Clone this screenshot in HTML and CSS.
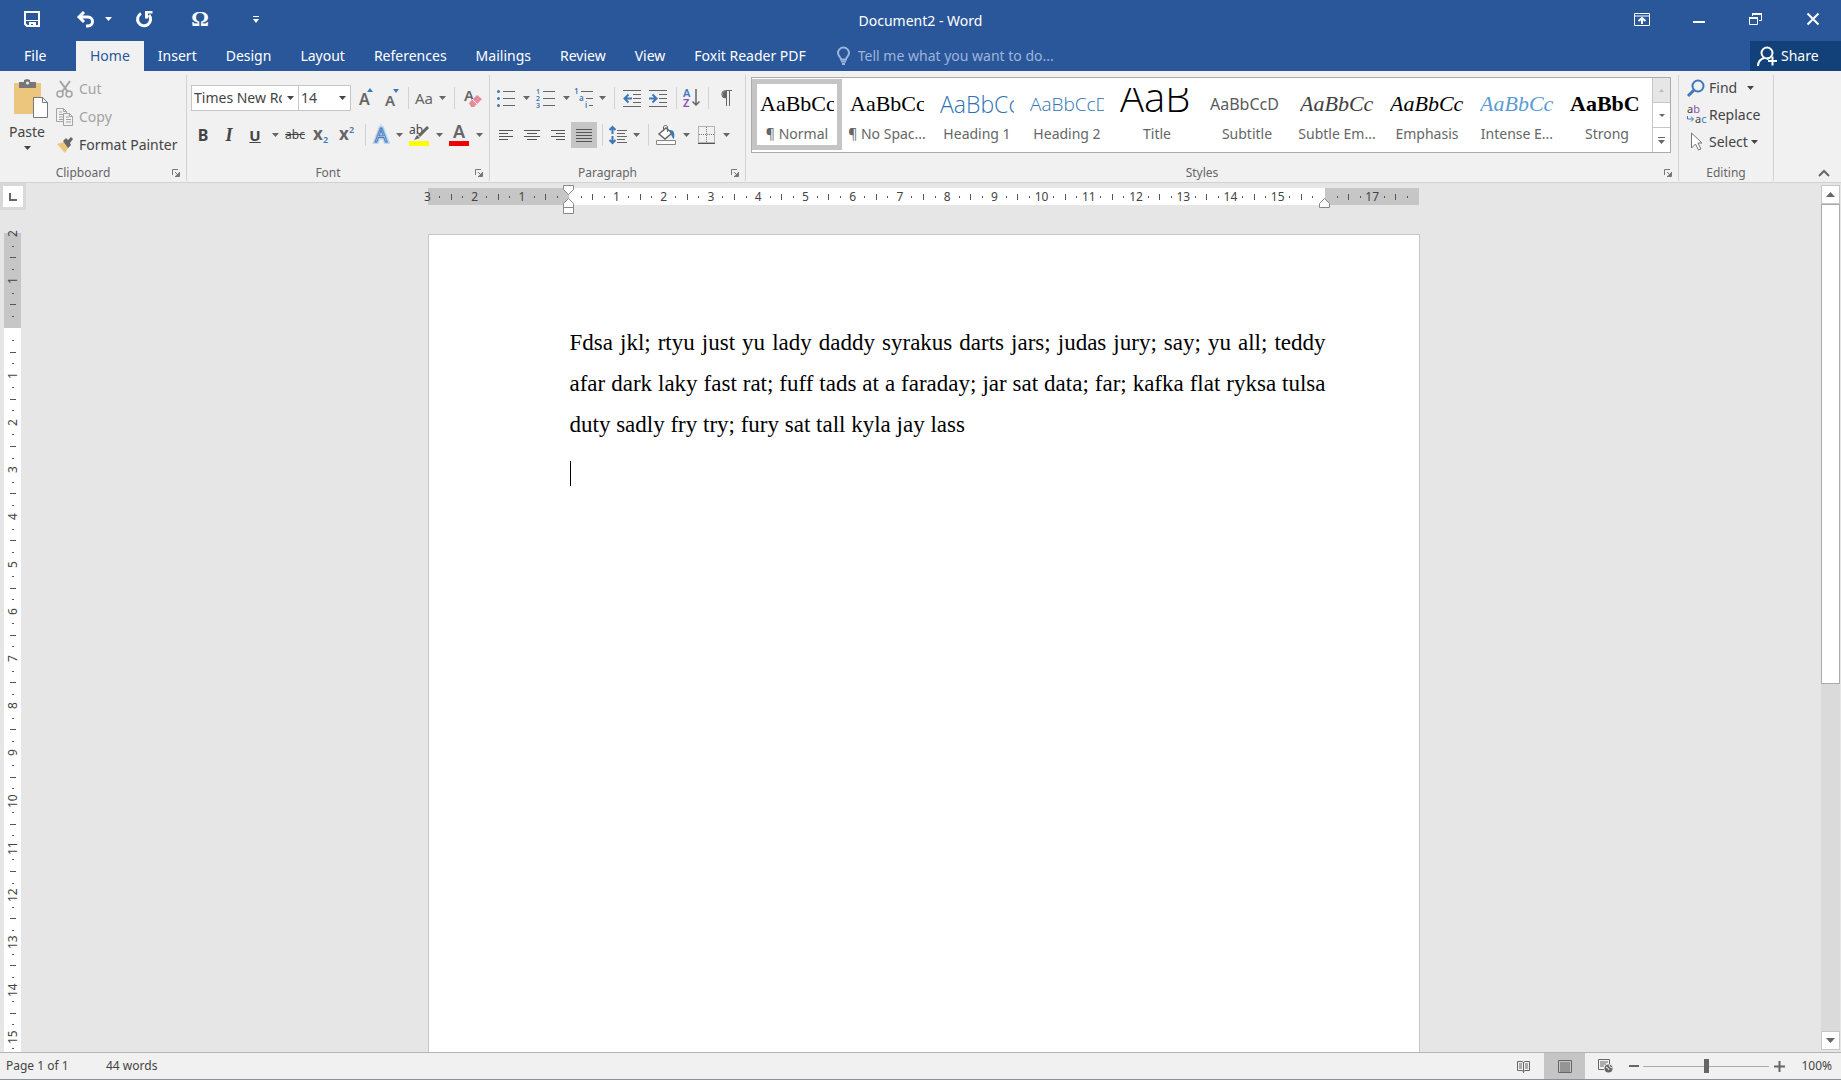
FILE: index.html
```html
<!DOCTYPE html>
<html lang="en">
<head>
<meta charset="utf-8">
<title>Document2 - Word</title>
<link rel="stylesheet" href="styles.css">
</head>
<body>
<svg class="defs" aria-hidden="true">
  <symbol id="caret" viewBox="0 0 7 4"><path d="M0 0h7L3.500 4z" fill="currentColor"/></symbol>
  <symbol id="launch" viewBox="0 0 8 8"><path d="M.5 6V.5H6M3 3l3 3M7.500 3v4.500H3" fill="none" stroke="#777"/><path d="M7 3.500V7H3.500z" fill="#777"/></symbol>
</svg>
<div class="app">
  <header class="titlebar">
    <div class="quick">
      <button class="q-save" aria-label="Save"><svg width="16" height="16"><path d="M1 1h14v14H3l-2-2z" fill="none" stroke="#fff" stroke-width="2"/><path d="M2 9h12v1H2zM5 11h7v5H9v-3H7v3H5z" fill="#fff"/></svg></button>
      <button class="q-undo" aria-label="Undo"><svg width="18" height="17"><path d="M7 1L2 6l5 5M2.500 6H11a4.500 4.500 0 0 1 0 9H9" fill="none" stroke="#fff" stroke-width="3"/></svg></button>
      <button class="q-caret" aria-label="Undo list"><svg width="7" height="4"><use href="#caret"/></svg></button>
      <button class="q-redo" aria-label="Repeat"><svg width="17" height="17"><path d="M5 2.500A6.500 6.500 0 1 0 13 4" fill="none" stroke="#fff" stroke-width="3"/><path d="M9 0h7.500v2.500H12v5H9z" fill="#fff"/></svg></button>
      <button class="q-omega" aria-label="Symbol">Ω</button>
      <button class="q-more" aria-label="Customize toolbar"><svg width="6" height="7"><path d="M0 .5h6" stroke="#fff"/><path d="M0 3h6L3 7z" fill="#fff"/></svg></button>
    </div>
    <h1 class="doc-title">Document2 - Word</h1>
    <div class="window-buttons">
      <button aria-label="Ribbon display options"><svg width="16" height="13"><path d="M.5.5h15v12H.5zM0 3h16" fill="none" stroke="#fff"/><path d="M8 11V5M4.500 8L8 5l3.500 3" fill="none" stroke="#fff" stroke-width="2"/></svg></button>
      <button class="low" aria-label="Minimize"><svg width="12" height="2"><path d="M0 0h12v2H0z" fill="#fff"/></svg></button>
      <button aria-label="Restore"><svg width="13" height="12"><path d="M3.500 3V.5h9v7H10M.5 4.500h8v7h-8z" fill="none" stroke="#fff"/><path d="M3 1h10M0 5h9" stroke="#fff" stroke-width="2"/></svg></button>
      <button aria-label="Close"><svg width="12" height="12"><path d="M.5.5l11 11M11.500.5l-11 11" stroke="#fff" stroke-width="2"/></svg></button>
    </div>
  </header>
  <nav class="tabs">
    <a class="file" href="#file">File</a>
    <a class="active" href="#home" aria-current="page">Home</a>
    <a href="#insert">Insert</a>
    <a href="#design">Design</a>
    <a href="#layout">Layout</a>
    <a href="#references">References</a>
    <a href="#mailings">Mailings</a>
    <a href="#review">Review</a>
    <a href="#view">View</a>
    <a href="#foxit">Foxit Reader PDF</a>
    <label class="tell">
      <svg width="13" height="18"><path d="M4 12.500C4 10 1 9.500 1 6a5.500 5.500 0 0 1 11 0c0 3.500-3 4-3 6.500z" fill="none" stroke="#9db4dc" stroke-width="2"/><path d="M4 14.500h5M5 17h3" stroke="#9db4dc" stroke-width="2"/></svg>
      <input type="text" placeholder="Tell me what you want to do..." aria-label="Tell me what you want to do">
    </label>
    <button class="share"><svg width="20" height="21"><circle cx="10" cy="7" r="5.500" fill="none" stroke="#fff" stroke-width="2"/><path d="M1 20c0-4.500 3-7 6-8M15.500 10.500v9M11 15h9M12 12l-2 1" fill="none" stroke="#fff" stroke-width="2"/></svg>Share</button>
  </nav>

  <section class="ribbon">
    <div class="group clipboard">
      <div class="clip-body">
        <button class="paste">
          <svg width="36" height="39"><path d="M1 4h27v31H1z" fill="#ebc67c"/><path d="M6 3h5V1l3-1 3 1v2h6v6H6z" fill="#777"/><circle cx="14.500" cy="4" r="1.500" fill="#f1f1f1"/><path d="M20.500 18.500h9l5 5v15h-14z" fill="#fff" stroke="#777"/><path d="M29.500 18.500v5h5" fill="none" stroke="#777"/></svg>
          <span>Paste</span>
          <svg width="7" height="4"><use href="#caret"/></svg>
        </button>
        <div class="stack">
          <button class="off"><svg width="18" height="18"><path d="M4 1l8 11M14 1L6 12" stroke="#a3a3a3" stroke-width="2" fill="none"/><circle cx="4" cy="14" r="3" fill="none" stroke="#a3a3a3" stroke-width="1.500"/><circle cx="13" cy="14" r="3" fill="none" stroke="#a3a3a3" stroke-width="1.500"/></svg>Cut</button>
          <button class="off"><svg width="18" height="18"><path d="M7 13.500H.5V.5h7l3 3V5M7.500.5v3h3M3 4h3M3 6.500h4M3 9h4M3 11.500h4" fill="none" stroke="#a3a3a3"/><path d="M7.500 5.500h6l3 3v9h-9zM13.500 5.500v3h3M10 9h3M10 11.500h5M10 14h5" fill="#f1f1f1" stroke="#a3a3a3"/></svg>Copy</button>
          <button><svg width="18" height="16"><path d="M1 7l7-2 5 5-4 6z" fill="#ebc67c"/><path d="M7 4l3-3 2 2 3-3 2 2-3 4 1 2-3 3z" fill="#666"/></svg>Format Painter</button>
        </div>
      </div>
      <footer><span>Clipboard</span><button aria-label="Clipboard settings"><svg width="8" height="8"><use href="#launch"/></svg></button></footer>
    </div>

    <div class="group font">
      <div class="rows">
        <div class="row combos">
          <span class="combo name"><select aria-label="Font"><option>Times New Roman</option></select><svg width="7" height="4"><use href="#caret"/></svg></span>
          <span class="combo size"><select aria-label="Font size"><option>14</option></select><svg width="7" height="4"><use href="#caret"/></svg></span>
          <button class="m" aria-label="Grow font"><svg width="20" height="20"><text class="ic" x="5" y="17" font-size="16">A</text><path d="M13 4l3-4 3 4z" fill="#3f78b8"/></svg></button>
          <button class="m" aria-label="Shrink font"><svg width="20" height="20"><text class="ic" x="5" y="18" font-size="15">A</text><path d="M13 1l3 4 3-4z" fill="#3f78b8"/></svg></button>
          <i class="sep"></i>
          <button class="s aa" aria-label="Change case">Aa</button><button class="c" aria-label="Case list"><svg width="7" height="4"><use href="#caret"/></svg></button>
          <i class="sep"></i>
          <button class="m" aria-label="Clear formatting"><svg width="18" height="20"><text class="ic" x="1" y="13" font-size="15">A</text><path d="M6 15l8-8 5 4-8 8H8z" fill="#e8899b"/><path d="M9 11l5 5" stroke="#fff"/></svg></button>
        </div>
        <div class="row font2">
          <button class="m bold" aria-label="Bold">B</button>
          <button class="m ital" aria-label="Italic">I</button>
          <button class="m under" aria-label="Underline">U</button><button class="c" aria-label="Underline list"><svg width="7" height="4"><use href="#caret"/></svg></button>
          <button class="m strike" aria-label="Strikethrough">abc</button>
          <button class="m" aria-label="Subscript"><svg width="18" height="20"><text class="ic heavy" x="1" y="15" font-size="17">x</text><text class="ic blue" x="11" y="18" font-size="9">2</text></svg></button>
          <button class="m" aria-label="Superscript"><svg width="18" height="20"><text class="ic heavy" x="1" y="15" font-size="17">x</text><text class="ic blue" x="11" y="8" font-size="9">2</text></svg></button>
          <i class="sep"></i>
          <button class="s" aria-label="Text effects"><svg width="20" height="22"><text x="4" y="18" class="fx-glow">A</text><text x="4" y="18" class="fx">A</text></svg></button><button class="c" aria-label="Effects list"><svg width="7" height="4"><use href="#caret"/></svg></button>
          <button class="m" aria-label="Highlight"><svg width="22" height="22"><path d="M1 17h20v5H1z" fill="#ff0"/><text class="ic thin" x="1" y="10" font-size="12">ab</text><path d="M20 3l-9 9" stroke="#666" stroke-width="3"/><path d="M6 16l3-5 3 3z" fill="#666"/></svg></button><button class="c" aria-label="Highlight list"><svg width="7" height="4"><use href="#caret"/></svg></button>
          <button class="m" aria-label="Font color"><svg width="20" height="22"><path d="M0 17h20v5H0z" fill="#f00000"/><text class="ic" x="4" y="14" font-size="18">A</text></svg></button><button class="c" aria-label="Color list"><svg width="7" height="4"><use href="#caret"/></svg></button>
        </div>
      </div>
      <footer><span>Font</span><button aria-label="Font settings"><svg width="8" height="8"><use href="#launch"/></svg></button></footer>
    </div>

    <div class="group para">
      <div class="rows">
        <div class="row">
          <button class="m" aria-label="Bullets"><svg width="18" height="18"><path d="M6 2.500h12M6 9.500h12M6 16.500h12" stroke="#666"/><circle cx="1.500" cy="2.500" r="1.500" fill="#3f78b8"/><circle cx="1.500" cy="9.500" r="1.500" fill="#3f78b8"/><circle cx="1.500" cy="16.500" r="1.500" fill="#3f78b8"/></svg></button><button class="c" aria-label="Bullet list"><svg width="7" height="4"><use href="#caret"/></svg></button>
          <button class="m" aria-label="Numbering"><svg width="20" height="20"><path d="M7 3.500h12M7 10.500h12M7 17.500h12" stroke="#666"/><g class="ic blue" font-size="7"><text x="0" y="6">1</text><text x="0" y="13">2</text><text x="0" y="20">3</text></g></svg></button><button class="c" aria-label="Number list"><svg width="7" height="4"><use href="#caret"/></svg></button>
          <button class="s" aria-label="Multilevel list"><svg width="20" height="20"><path d="M7 3.500h12M12 10.500h7M15 17.500h4" stroke="#666"/><g class="ic blue" font-size="8"><text x="0" y="6">1</text><text x="5" y="13">a</text><text x="11" y="20">i</text></g></svg></button><button class="c" aria-label="Multilevel choices"><svg width="7" height="4"><use href="#caret"/></svg></button>
          <i class="sep"></i>
          <button class="m" aria-label="Decrease indent"><svg width="18" height="18"><path d="M0 1.500h18M10 5.500h8M10 9.500h8M10 13.500h8M0 17.500h18" stroke="#666"/><path d="M9 9.500H2M5.500 5.500l-4 4 4 4" fill="none" stroke="#3f78b8" stroke-width="2"/></svg></button>
          <button class="m" aria-label="Increase indent"><svg width="18" height="18"><path d="M0 1.500h18M10 5.500h8M10 9.500h8M10 13.500h8M0 17.500h18" stroke="#666"/><path d="M0 9.500h7M3.500 5.500l4 4-4 4" fill="none" stroke="#3f78b8" stroke-width="2"/></svg></button>
          <i class="sep"></i>
          <button class="s" aria-label="Sort"><svg width="18" height="20"><text class="ic blue" x="0" y="9" font-size="11">A</text><text class="ic purple" x="0" y="19" font-size="11">Z</text><path d="M13 1v16M9.500 13.500L13 17l3.500-3.500" fill="none" stroke="#666" stroke-width="1.500"/></svg></button>
          <i class="sep"></i>
          <button class="m" aria-label="Show paragraph marks"><svg width="12" height="16"><path d="M5.500 8A3.500 3.500 0 0 1 5.500.5H12M6.500 1v15M9.500 1v15" fill="none" stroke="#666"/><path d="M6 1v7a3.500 3.500 0 0 1 0-7z" fill="#666"/></svg></button>
        </div>
        <div class="row">
          <button class="m" aria-label="Align left"><svg width="14" height="12"><path d="M0 1.500h14M0 4.500h9M0 7.500h14M0 10.500h9" stroke="#555"/></svg></button>
          <button class="m" aria-label="Center"><svg width="16" height="12"><path d="M0 1.500h16M3 4.500h10M0 7.500h16M3 10.500h10" stroke="#555"/></svg></button>
          <button class="m" aria-label="Align right"><svg width="14" height="12"><path d="M0 1.500h14M5 4.500h9M0 7.500h14M5 10.500h9" stroke="#555"/></svg></button>
          <button class="m on" aria-label="Justify" aria-pressed="true"><svg width="16" height="14"><path d="M0 1.500h16M0 4.500h16M0 7.500h16M0 10.500h16M0 13.500h16" stroke="#555"/></svg></button>
          <i class="sep"></i>
          <button class="s" aria-label="Line spacing"><svg width="18" height="18"><path d="M8 4.500h10M8 7.500h8M8 10.500h10M8 13.500h8M8 16.500h10" stroke="#666"/><path d="M3.500 1v7M.5 4l3-3 3 3M3.500 10v7M.5 14l3 3 3-3" fill="none" stroke="#3f78b8" stroke-width="2"/></svg></button><button class="c" aria-label="Spacing list"><svg width="7" height="4"><use href="#caret"/></svg></button>
          <i class="sep"></i>
          <button class="m" aria-label="Shading"><svg width="20" height="20"><path d="M.5 15.500h19v4H.5z" fill="#fff" stroke="#888"/><path d="M3 9l7-6 6 5-7 6z" fill="#fff" stroke="#666" stroke-width="1.500"/><path d="M7.500 5V2c0-2 4-2 4 0v5" fill="none" stroke="#666"/><path d="M14 5c4 0 5 3 4 9-2-1-2-4-4-6z" fill="#3f78b8"/></svg></button><button class="c" aria-label="Shading list"><svg width="7" height="4"><use href="#caret"/></svg></button>
          <button class="m" aria-label="Borders"><svg width="17" height="18"><path d="M.5.5h16v16H.5zM8.500 1v16M1 8.500h16" fill="none" stroke="#777" stroke-dasharray="1 1"/><path d="M0 17.500h17" stroke="#555"/></svg></button><button class="c" aria-label="Border list"><svg width="7" height="4"><use href="#caret"/></svg></button>
        </div>
      </div>
      <footer><span>Paragraph</span><button aria-label="Paragraph settings"><svg width="8" height="8"><use href="#launch"/></svg></button></footer>
    </div>

    <div class="group styles">
      <div class="gallery">
        <button class="style chosen"><b class="serif">AaBbCc</b><span>¶ Normal</span></button>
        <button class="style"><b class="serif">AaBbCc</b><span>¶ No Spac...</span></button>
        <button class="style"><b class="h1">AaBbCc</b><span>Heading 1</span></button>
        <button class="style"><b class="h2">AaBbCcD</b><span>Heading 2</span></button>
        <button class="style"><b class="big">AaB</b><span>Title</span></button>
        <button class="style"><b class="sub">AaBbCcD</b><span>Subtitle</span></button>
        <button class="style"><b class="serif em soft">AaBbCc</b><span>Subtle Em...</span></button>
        <button class="style"><b class="serif em">AaBbCc</b><span>Emphasis</span></button>
        <button class="style"><b class="serif em intense">AaBbCc</b><span>Intense E...</span></button>
        <button class="style"><b class="serif strong">AaBbC</b><span>Strong</span></button>
        <div class="gallery-nav">
          <button class="dim" aria-label="Previous styles"><svg width="5" height="3"><path d="M0 3h5L2.500 0z" fill="#bbb"/></svg></button>
          <button aria-label="Next styles"><svg width="6" height="3"><path d="M0 0h6L3 3z" fill="#666"/></svg></button>
          <button aria-label="More styles"><svg width="7" height="7"><path d="M0 .5h7" stroke="#666"/><path d="M0 3h7L3.500 7z" fill="#666"/></svg></button>
        </div>
      </div>
      <footer><span>Styles</span><button aria-label="Styles settings"><svg width="8" height="8"><use href="#launch"/></svg></button></footer>
    </div>

    <div class="group editing">
      <div class="stack">
        <button><svg width="20" height="18"><circle cx="12" cy="7" r="5.500" fill="none" stroke="#3f78b8" stroke-width="2"/><path d="M8 11l-6 6" stroke="#3f78b8" stroke-width="3"/></svg>Find<svg class="find-caret" width="7" height="4"><use href="#caret"/></svg></button>
        <button><svg width="20" height="20"><text class="ic thin" x="1" y="8" font-size="11">a<tspan class="purple">b</tspan></text><text class="ic thin" x="9" y="18" font-size="11">a<tspan class="blue">c</tspan></text><path d="M1.500 11v3H7M5 11.500L7.500 14 5 16.500" fill="none" stroke="#3f78b8"/></svg>Replace</button>
        <button><svg width="20" height="19"><path d="M5.500 1v15l4-4 3 6 2.500-1-3-6h4z" fill="#fff" stroke="#777"/></svg>Select<svg width="7" height="4"><use href="#caret"/></svg></button>
      </div>
      <footer><span>Editing</span></footer>
    </div>
    <button class="collapse" aria-label="Collapse ribbon"><svg width="12" height="7"><path d="M1 6l5-5 5 5" fill="none" stroke="#666" stroke-width="2"/></svg></button>
  </section>

  <main class="work">
    <aside class="left">
      <button class="tabstop" aria-label="Tab stop"><svg width="8" height="8"><path d="M1 0v7h7" fill="none" stroke="#666" stroke-width="2"/></svg></button>
      <div class="vruler" aria-hidden="true">
        <i class="shade"><b>2</b></i><i class="shade"><b>1</b></i><i></i><i><b>1</b></i><i><b>2</b></i><i><b>3</b></i><i><b>4</b></i><i><b>5</b></i><i><b>6</b></i><i><b>7</b></i><i><b>8</b></i><i><b>9</b></i><i><b>10</b></i><i><b>11</b></i><i><b>12</b></i><i><b>13</b></i><i><b>14</b></i><i><b>15</b></i>
      </div>
    </aside>
    <div class="canvas">
      <div class="hruler" aria-hidden="true">
        <i class="shade"><b>3</b></i><i class="shade"><b>2</b></i><i class="shade"><b>1</b></i><i></i><i><b>1</b></i><i><b>2</b></i><i><b>3</b></i><i><b>4</b></i><i><b>5</b></i><i><b>6</b></i><i><b>7</b></i><i><b>8</b></i><i><b>9</b></i><i><b>10</b></i><i><b>11</b></i><i><b>12</b></i><i><b>13</b></i><i><b>14</b></i><i><b>15</b></i><i class="shade"></i><i class="shade"><b>17</b></i>
        <svg class="indent" width="11" height="29"><path d="M.5.5h10v4l-5 5-5-5zM.5 22.500v-4l5-5 5 5v4zM.5 22.500h10v6H.5z" fill="#fff" stroke="#888"/></svg>
        <svg class="indent-right" width="11" height="10"><path d="M.5 9.500v-4l5-5 5 5v4z" fill="#fff" stroke="#888"/></svg>
      </div>
      <article class="page" contenteditable="true" spellcheck="false">
        <p>Fdsa jkl; rtyu just yu lady daddy syrakus darts jars; judas jury; say; yu all; teddy afar dark laky fast rat; fuff tads at a faraday; jar sat data; far; kafka flat ryksa tulsa duty sadly fry try; fury sat tall kyla jay lass</p>
        <div class="cursor"></div>
      </article>
    </div>
    <div class="scroll">
      <button aria-label="Scroll up"><svg width="9" height="5"><path d="M0 5h9L4.500 0z" fill="#666"/></svg></button>
      <div class="track"><div class="thumb"></div></div>
      <button aria-label="Scroll down"><svg width="9" height="5"><path d="M0 0h9L4.500 5z" fill="#666"/></svg></button>
    </div>
  </main>

  <footer class="status">
    <span class="pages">Page 1 of 1</span><span>44 words</span>
    <div class="views">
      <button aria-label="Read mode"><svg width="13" height="13"><path d="M6.500 2v11M.5 1.500H5l1.500 1L8 1.500h4.500v9H8l-1.500 1-1.500-1H.5zM2 4h3M2 6h3M2 8h3M8 4h3M8 6h3M8 8h3" fill="none" stroke="#666"/></svg></button>
      <button class="on" aria-label="Print layout"><svg width="14" height="13"><path d="M.5.5h13v12H.5zM2 3h10M2 5h10M2 7h10M2 9h10M2 11h10" fill="none" stroke="#666"/></svg></button>
      <button aria-label="Web layout"><svg width="15" height="14"><path d="M6 10.500H.5V.5h11V5M2 3h8M2 5h6M2 7h4" fill="none" stroke="#666"/><circle cx="10.500" cy="9.500" r="4" fill="#666"/><path d="M8 8l2 1 1 2M11 6l1 2 2 1" stroke="#f1f1f1" fill="none"/></svg></button>
    </div>
    <div class="zoom">
      <button aria-label="Zoom out"><svg width="10" height="2"><path d="M0 0h10v2H0z" fill="#666"/></svg></button>
      <input type="range" min="0" max="200" value="100" aria-label="Zoom">
      <button aria-label="Zoom in"><svg width="11" height="11"><path d="M0 5.500h11M5.500 0v11" stroke="#666" stroke-width="2"/></svg></button>
      <span>100%</span>
    </div>
  </footer>
</div>
</body>
</html>
```
FILE: styles.css
```css
* { box-sizing: border-box; }
body { margin: 0; font: 14px/20px "Noto Sans", "Open Sans", sans-serif; color: #444; }
button { border: 0; padding: 0; margin: 0; background: none; font: inherit; color: inherit; display: flex; align-items: center; justify-content: center; }
a { text-decoration: none; color: inherit; }
svg { flex: none; display: block; overflow: visible; }
.defs { position: absolute; width: 0; height: 0; }
.app { display: flex; flex-direction: column; height: 100vh; background: #e6e6e6; overflow: hidden; }

/* title bar */
.titlebar { display: grid; grid-template-columns: 1fr auto 1fr; background: #2a579a; color: #fff; height: 41px; align-items: start; flex: none; }
.quick { display: flex; align-items: center; padding-left: 12px; }
.quick button { width: 40px; height: 38px; flex: none; }
.quick .q-undo { width: 28px; margin-left: 20px; }
.quick .q-caret { width: 16px; margin-right: 8px; }
.quick .q-omega { margin: 0 16px; font: bold 22px/22px "Liberation Serif", serif; }
.doc-title { margin: 0; font-size: 14px; line-height: 41px; font-weight: 400; }
.window-buttons { display: flex; justify-content: flex-end; }
.window-buttons button { width: 57px; height: 38px; }
.window-buttons .low { padding-top: 6px; }

/* tabs */
.tabs { display: flex; background: #2a579a; color: #fff; height: 30px; flex: none; }
.tabs a { padding: 5px 15px 5px 14px; }
.tabs .file { width: 76px; padding-left: 24px; }
.tabs .active { background: #f1f1f1; color: #2a579a; padding-right: 14px; }
.tell { display: flex; align-items: center; gap: 8px; padding-left: 16px; flex: 1; }
.tell input { border: 0; background: none; font: inherit; padding: 0; width: 240px; color: #fff; outline: 0; }
.tell input::placeholder { color: #9db4dc; opacity: 1; }
.share { width: 91px; background: #124078; gap: 4px; justify-content: flex-start; padding-left: 7px; }

/* ribbon */
.ribbon { display: flex; background: #f1f1f1; border-bottom: 1px solid #d2d2d2; padding: 4px 0 1px; height: 112px; flex: none; }
.group { display: flex; flex-direction: column; border-right: 1px solid #d2d2d2; }
.group > :first-child { flex: 1; min-height: 0; }
.group footer { display: grid; grid-template-columns: 1fr 20px; height: 16px; font-size: 12px; line-height: 16px; color: #666; flex: none; }
.group footer span { text-align: center; }
.group.editing footer { grid-template-columns: 1fr; }
.clipboard { width: 187px; }
.font { width: 303px; }
.para { width: 256px; }
.styles { flex: 1; min-width: 0; }
.editing { width: 95px; }
.clip-body { display: flex; }
.paste { width: 54px; flex-direction: column; justify-content: flex-start; padding-top: 4px; gap: 4px; }
.paste svg:first-child { margin-left: 8px; }
.stack { display: flex; flex-direction: column; }
.stack button { height: 28px; gap: 5px; justify-content: flex-start; }
.clip-body .stack { padding-left: 2px; }
.off { color: #a3a3a3; }
.rows { display: flex; flex-direction: column; padding: 10px 0 0 3px; gap: 11px; }
.row { display: flex; height: 26px; align-items: center; }
.combos { padding-left: 1px; }
.row button { height: 26px; flex: none; }
.m { width: 26px; }
.s { width: 22px; }
.c { width: 14px; color: #666; }
.on { background: #c5c5c5; }
.sep { width: 1px; height: 22px; margin: 0 4px 0 5px; background: #d2d2d2; }
.combo { position: relative; height: 26px; }
.combo.name { width: 108px; }
.combo.size { width: 52px; }
.combo select { appearance: none; width: 100%; height: 26px; border: 1px solid #c6c6c6; border-radius: 0; background: #fff; font: inherit; color: inherit; padding: 0 16px 0 2px; }
.combo.size select { border-left: 0; }
.combo svg { position: absolute; right: 5px; top: 11px; }
.ic { font-family: "Noto Sans", "Open Sans", sans-serif; font-weight: 600; fill: #666; }
.thin { font-weight: 400; fill: #444; }
.heavy { font-weight: 700; }
.blue { fill: #3f78b8; }
.purple { fill: #8e4db0; }
.bold { font-weight: 700; font-size: 16px; }
.row .ital { font: italic bold 18px/20px "Liberation Serif", serif; }
.row .under { font-weight: 700; font-size: 15px; text-decoration: underline; }
.strike { font-size: 12px; text-decoration: line-through; }
.aa { font-size: 15px; color: #666; }
.fx, .fx-glow { font: 19px "Noto Sans", "Open Sans", sans-serif; }
.fx { fill: #fff; stroke: #3f78b8; stroke-width: 1; }
.fx-glow { fill: none; stroke: #bcd6f2; stroke-width: 4; }

/* style gallery */
.group .gallery { display: flex; flex: 0 0 76px; margin: 2px 7px auto 5px; border: 1px solid #ababab; background: #fff; padding-top: 1px; overflow: hidden; }
.style { flex: 1; min-width: 0; height: 71px; border: 5px solid transparent; padding-top: 4px; flex-direction: column; justify-content: flex-start; }
.chosen { border-color: #c5c5c5; }
.style b { flex: none; width: 74px; height: 32px; line-height: 32px; overflow: hidden; white-space: nowrap; text-align: left; font-weight: 400; color: #000; }
.style span { line-height: 28px; color: #666; white-space: nowrap; }
.serif { font-family: "Liberation Serif", serif; font-size: 22px; }
.style .h1, .style .h2, .style .big { font-family: "Open Sans", sans-serif; font-weight: 300; color: #2e74b5; }
.style .h1 { font-size: 23px; }
.style .h2 { font-size: 19px; }
.style .big { font-size: 40px; line-height: 18px; color: #000; }
.style .sub { font-size: 16px; color: #5a5a5a; }
.em { font-style: italic; }
.style .soft { color: #404040; }
.style .intense { color: #5b9bd5; }
.style .strong { font-weight: 700; }
.gallery-nav { width: 18px; margin-top: -1px; display: flex; flex-direction: column; border-left: 1px solid #c6c6c6; }
.gallery-nav button { flex: 1; }
.gallery-nav button + button { border-top: 1px solid #c6c6c6; }
.dim { background: #e6e6e6; }
.editing .stack { padding-left: 7px; }
.editing .stack button { height: 27px; gap: 3px; }
.editing .stack button:first-child { height: 26px; }
.editing .find-caret { margin-left: 7px; }
.collapse { flex: 0 0 67px; align-items: flex-end; padding: 0 0 4px 33px; }

/* work area */
.work { flex: 1; min-height: 0; display: grid; grid-template-columns: 26px minmax(0, 1fr) 20px; grid-template-rows: minmax(0, 1fr); }
.left { overflow: hidden; }
.tabstop { width: 26px; height: 27px; border: 3px solid #d8d8d8; background: #fff; }
.vruler { width: 17px; height: 851px; margin: 23px 0 0 4px; padding-top: 1px; background: #c6c6c6; display: flex; flex-direction: column; }
.vruler i, .hruler i { flex: 1; min-width: 0; min-height: 0; background-color: #fff; background-repeat: no-repeat; background-image: linear-gradient(#555, #555), linear-gradient(#555, #555), linear-gradient(#555, #555); font: 12px/17px "Noto Sans", "Open Sans", sans-serif; display: flex; }
.vruler i { background-size: 2px 1px, 6px 1px, 2px 1px; background-position: 50% 25%, 50% 50%, 50% 75%; }
.hruler i { background-size: 1px 2px, 1px 6px, 1px 2px; background-position: 25% 50%, 50% 50%, 75% 50%; }
.vruler .shade, .hruler .shade { background-color: #c6c6c6; }
.vruler b, .hruler b { font-weight: 400; text-align: center; flex: none; }
.vruler b { writing-mode: vertical-rl; transform: rotate(180deg); width: 17px; height: 20px; margin-top: -10px; }
.hruler b { width: 20px; margin-left: -10px; }
.canvas { overflow: hidden; display: flex; flex-direction: column; align-items: center; padding-top: 5px; }
.hruler { position: relative; flex: none; width: 992px; max-width: 100%; height: 17px; display: flex; }
.indent { position: absolute; left: 135px; top: -3px; }
.indent-right { position: absolute; right: 90px; top: 10px; }
.page { flex: none; width: 992px; max-width: 100%; min-height: 1403px; margin-top: 29px; padding: 87px 93px 94px 141px; background: #fff; border: 1px solid #c6c6c6; outline: 0; font: 23px/41px "Liberation Serif", serif; color: #000; font-variant-ligatures: none; }
.page p { margin: 0 0 16px; text-align: justify; }
.cursor { width: 1px; height: 25px; background: #000; }
.scroll { display: flex; flex-direction: column; padding: 2px 1px 2px 0; }
.scroll button { height: 19px; background: #fff; border: 1px solid #c6c6c6; }
.track { flex: 1; background: #dadada; }
.thumb { height: 58%; background: #fff; border: 1px solid #ababab; }

/* status bar */
.status { display: flex; align-items: center; flex: none; height: 28px; background: #f1f1f1; border-top: 1px solid #b4b4b4; border-bottom: 1px solid #8a8f9a; padding: 0 9px 0 6px; font-size: 12px; }
.pages { width: 100px; }
.views { margin-left: auto; display: flex; align-self: stretch; }
.views button { width: 41px; }
.zoom { display: flex; align-items: center; margin-left: 1px; }
.zoom button { width: 14px; height: 20px; }
.zoom input { appearance: none; width: 126px; height: 14px; margin: 0 3px 0 2px; background: linear-gradient(#ababab, #ababab) center / 100% 1px no-repeat; }
.zoom input::-webkit-slider-thumb { appearance: none; width: 5px; height: 14px; background: #666; }
.zoom span { width: 46px; text-align: right; }
```
